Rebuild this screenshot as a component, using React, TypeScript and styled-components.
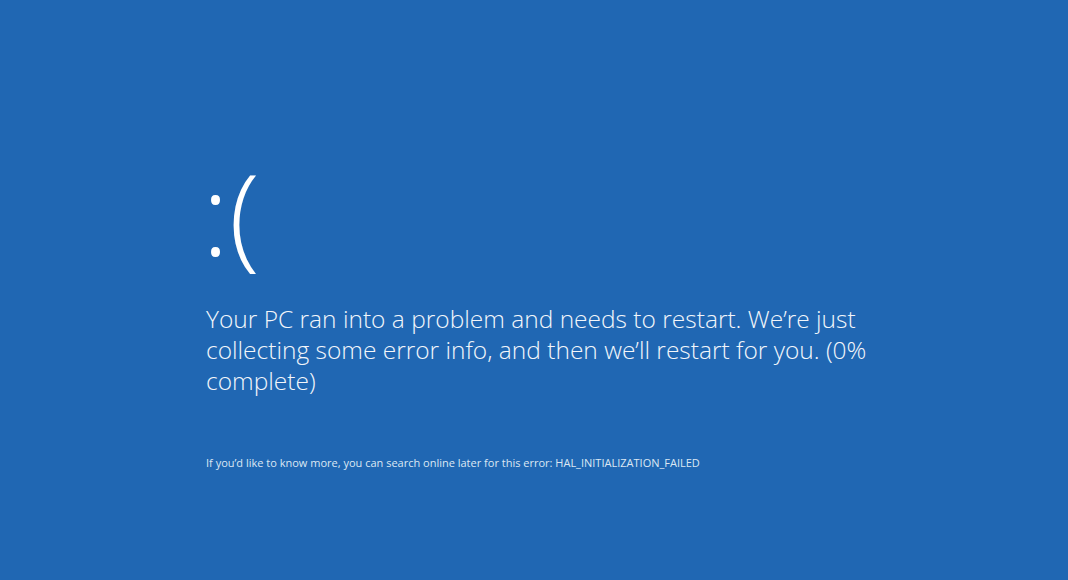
import styled, { createGlobalStyle } from 'styled-components';

const GlobalStyle = createGlobalStyle`
	html, body {
		margin: 0;
		padding: 0;
		background: #2067b3;
	}
`;

const Screen = styled.div`
	width: 1068px;
	height: 580px;
	background: #2067b3;
	color: #ffffff;
	font-family: 'Open Sans', 'Noto Sans', sans-serif;
	font-weight: 300;
	display: flex;
	flex-direction: column;
	padding: 156px 0 0 202px;
	box-sizing: border-box;
	overflow: hidden;
`;

const Face = styled.div`
	font-size: 113px;
	line-height: 1;
	height: 147px;
	letter-spacing: 0;
`;

const Message = styled.p`
	margin: 0;
	width: 690px;
	font-size: 24.5px;
	line-height: 31px;
	padding-left: 4px;
	color: #f2f6fb;
`;

const Details = styled.p`
	margin: 59px 0 0;
	padding-left: 4px;
	font-size: 11px;
	color: #dce7f3;
	font-weight: 400;
`;

export default function App() {
	return (
		<>
			<GlobalStyle />
			<Screen>
				<Face>:(</Face>
				<Message>
					Your PC ran into a problem and needs to restart. We’re just collecting some error info, and then we’ll restart for you. (0% complete)
				</Message>
				<Details>
					If you’d like to know more, you can search online later for this error: HAL_INITIALIZATION_FAILED
				</Details>
			</Screen>
		</>
	);
}
